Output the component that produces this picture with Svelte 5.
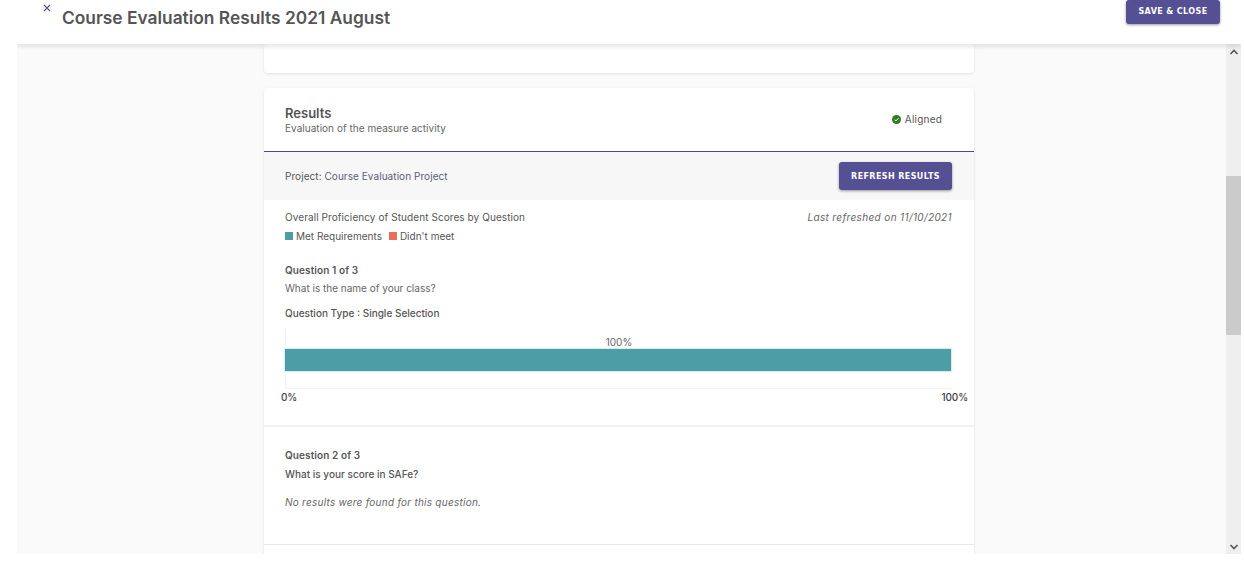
<script lang="ts">
  const questions = [
    { label: 'Question 1 of 3', text: 'What is the name of your class?', type: 'Single Selection', pct: 100 },
  ];
</script>

<div class="page">
  <header class="topbar">
    <button class="close" aria-label="Close">
      <svg width="8" height="8" viewBox="0 0 8 8"><path d="M1 1l6 6M7 1L1 7" stroke="#55508f" stroke-width="1.1" fill="none" /></svg>
    </button>
    <h1>Course Evaluation Results 2021 August</h1>
    <button class="btn save">SAVE &amp; CLOSE</button>
  </header>

  <div class="body">
    <main class="content">
      <div class="stub card"></div>

      <section class="card results">
        <div class="results-head">
          <div>
            <h2>Results</h2>
            <p>Evaluation of the measure activity</p>
          </div>
          <div class="status">
            <svg width="9" height="9" viewBox="0 0 9 9"><circle cx="4.5" cy="4.5" r="4.5" fill="#2e7d1e" /><path d="M2.5 4.6l1.4 1.4 2.6-2.8" stroke="#fff" stroke-width="1" fill="none" /></svg>
            <span>Aligned</span>
          </div>
        </div>

        <div class="project">
          <span><span class="key">Project:</span> <span class="val">Course Evaluation Project</span></span>
          <button class="btn refresh">REFRESH RESULTS</button>
        </div>

        <div class="question first">
          <div class="overall">
            <div>
              <div class="overall-title">Overall Proficiency of Student Scores by Question</div>
              <div class="legend">
                <i class="swatch met"></i><span>Met Requirements</span>
                <i class="swatch miss"></i><span>Didn't meet</span>
              </div>
            </div>
            <em>Last refreshed on 11/10/2021</em>
          </div>

          {#each questions as q}
            <div class="q-label">{q.label}</div>
            <div class="q-text">{q.text}</div>
            <div class="q-type">Question Type : {q.type}</div>
            <div class="chart">
              <div class="plot">
                <div class="value">{q.pct}%</div>
                <div class="bar" style="width: {q.pct}%"></div>
              </div>
              <div class="axis"><span>0%</span><span>100%</span></div>
            </div>
          {/each}
        </div>

        <div class="question second">
          <div class="q-label">Question 2 of 3</div>
          <div class="q-text strong">What is your score in SAFe?</div>
          <em class="none">No results were found for this question.</em>
        </div>
        <div class="next"></div>
      </section>
    </main>

    <div class="scrollbar">
      <svg class="arrow up" width="10" height="6" viewBox="0 0 10 6"><path d="M1.5 5L5 1.5 8.5 5" stroke="#555" stroke-width="1.6" fill="none" /></svg>
      <div class="thumb"></div>
      <svg class="arrow down" width="10" height="6" viewBox="0 0 10 6"><path d="M1.5 1L5 4.5 8.5 1" stroke="#555" stroke-width="1.6" fill="none" /></svg>
    </div>
  </div>
</div>

<style>
  :global(body) {
    background: #fff;
    font-family: Inter, "Noto Sans", sans-serif;
    color: #555;
  }

  .page {
    width: 1244px;
    height: 565px;
    overflow: hidden;
    position: relative;
  }

  .topbar {
    height: 44px;
    background: #fff;
    display: flex;
    align-items: flex-start;
    padding: 0 24px 0 43px;
    box-sizing: border-box;
  }

  .close {
    border: 0;
    background: none;
    padding: 0;
    margin: 4px 11px 0 0;
    width: 8px;
    height: 8px;
    display: flex;
  }

  h1 {
    flex: 1;
    margin: 8px 0 0;
    font-size: 17.35px;
    line-height: 20px;
    font-weight: 600;
    color: #555;
  }

  .btn {
    border: 0;
    background: #554f93;
    color: #fff;
    font-family: "DejaVu Sans", sans-serif;
    font-weight: 700;
    font-size: 8px;
    letter-spacing: 0.4px;
    border-radius: 3px;
    box-shadow: 0 1px 3px rgba(0, 0, 0, 0.4);
  }

  .save {
    width: 94px;
    height: 24px;
    padding: 0 0 2px;
  }

  .body {
    height: 510px;
    margin-left: 17px;
    width: 1224px;
    display: flex;
    overflow: hidden;
    position: relative;
  }

  /* header shadow only falls on the scrolling area */
  .body::before {
    content: "";
    position: absolute;
    z-index: 1;
    top: -2px;
    left: 0;
    right: 0;
    height: 2px;
    box-shadow: 0 1px 5px rgba(0, 0, 0, 0.28);
  }

  .content {
    width: 1209px;
    background: #fafafa;
    padding-left: 247px;
    box-sizing: border-box;
    overflow: hidden;
  }

  .card {
    width: 710px;
    background: #fff;
    border-radius: 4px;
    box-shadow: 0 1px 3px rgba(0, 0, 0, 0.1);
  }

  .stub {
    height: 29px;
    margin-bottom: 15px;
  }

  .results-head {
    height: 63px;
    padding: 0 32px 0 21px;
    display: flex;
    justify-content: space-between;
    align-items: center;
    border-bottom: 1px solid #4f4b72;
  }

  h2 {
    margin: 0;
    font-size: 13px;
    line-height: 15px;
    font-weight: 600;
    color: #555;
  }

  .results-head p {
    margin: 1px 0 0;
    font-size: 10px;
    line-height: 12px;
    letter-spacing: 0.03px;
    color: #666;
  }

  .status {
    display: flex;
    align-items: center;
    gap: 4px;
    font-size: 10px;
    letter-spacing: 0.2px;
    color: #555;
    margin-top: -1px;
  }

  .status svg {
    display: block;
  }

  .project {
    height: 48px;
    background: #f7f7f7;
    padding: 0 22px 0 21px;
    display: flex;
    justify-content: space-between;
    align-items: center;
    font-size: 10px;
    letter-spacing: 0.06px;
  }

  .key {
    color: #555;
  }

  .val {
    color: #5a6070;
  }

  .refresh {
    width: 113px;
    height: 28px;
    padding: 1px 0 0;
    letter-spacing: 0.4px;
  }

  .question {
    padding: 0 21px;
    border-bottom: 2px solid #f2f2f2;
    font-size: 10px;
    line-height: 12px;
  }

  .first {
    height: 227px;
    box-sizing: border-box;
    padding-top: 11px;
  }

  .overall {
    display: flex;
    justify-content: space-between;
    align-items: flex-start;
    color: #555;
    height: 53px;
    padding-right: 1px;
  }

  .overall-title {
    letter-spacing: 0.08px;
  }

  .overall em {
    color: #666;
    letter-spacing: 0.36px;
  }

  .legend {
    display: flex;
    align-items: center;
    margin-top: 7px;
  }

  .swatch {
    width: 8px;
    height: 8px;
    margin-right: 3px;
  }

  .met {
    background: #4c9da5;
  }

  .miss {
    background: #ee6b5b;
    margin-left: 7px;
  }

  .q-label {
    font-weight: 600;
    letter-spacing: 0.1px;
    color: #555;
  }

  .q-text {
    margin-top: 6px;
    color: #666;
  }

  .q-text.strong {
    margin-top: 7px;
    font-weight: 500;
    color: #555;
  }

  .q-type {
    margin-top: 13px;
    font-weight: 500;
    color: #555;
  }

  .chart {
    margin-top: 8px;
  }

  .plot {
    height: 62px;
    box-sizing: border-box;
    position: relative;
    border-bottom: 1px solid #f3f3f3;
    margin-right: 2px;
    padding-top: 9px;
  }

  .plot::before {
    content: "";
    position: absolute;
    left: 0;
    top: 0;
    bottom: 0;
    width: 1px;
    background: #f3f3f3;
  }

  .value {
    text-align: center;
    color: #666;
    height: 13px;
    line-height: 13px;
    padding-left: 2px;
    letter-spacing: -0.05px;
  }

  .bar {
    position: relative;
    height: 22px;
    background: #4c9da5;
    box-shadow: 0 0 0 1px #d4edf0;
  }

  .axis {
    display: flex;
    justify-content: space-between;
    margin: 2px -15px 0 -4px;
    color: #444;
    font-weight: 500;
    letter-spacing: -0.1px;
  }

  .second {
    height: 118px;
    box-sizing: border-box;
    padding-top: 22px;
    border-bottom-color: #e8e8e8;
    border-bottom-width: 1px;
  }

  .none {
    display: block;
    margin-top: 16px;
    color: #666;
    letter-spacing: 0.25px;
  }

  .next {
    height: 30px;
  }

  .scrollbar {
    width: 15px;
    background: #efefef;
    position: relative;
  }

  .thumb {
    position: absolute;
    top: 132px;
    left: 0;
    right: 0;
    height: 159px;
    background: #cbcbcb;
  }

  .arrow {
    position: absolute;
    left: 3px;
  }

  .up {
    top: 5px;
  }

  .down {
    bottom: 4px;
  }
</style>
